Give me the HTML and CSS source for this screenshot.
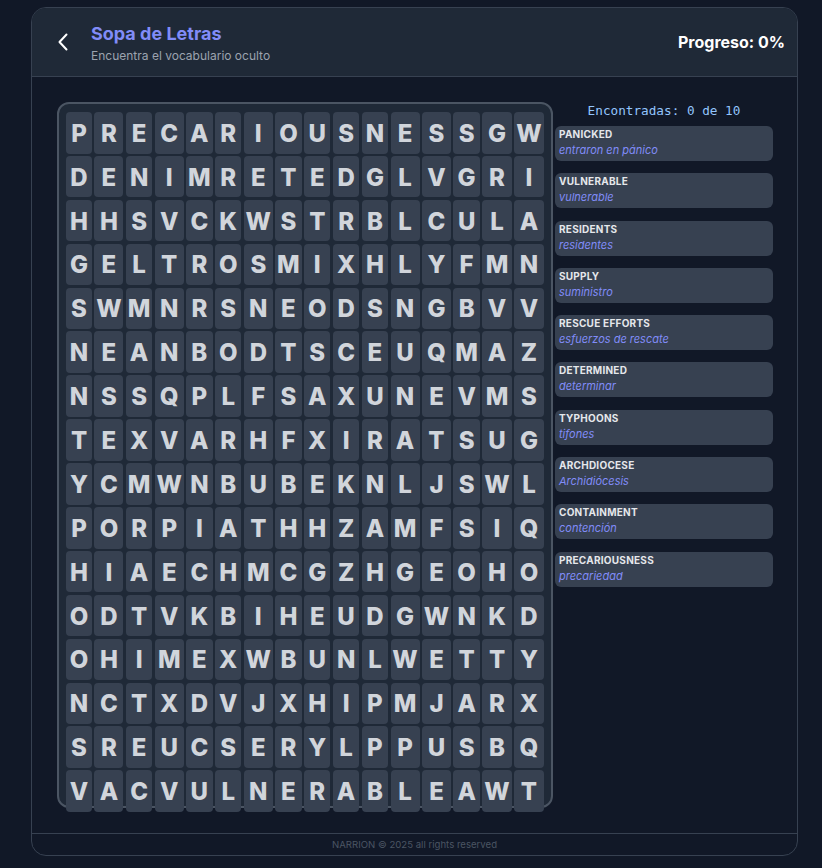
FILE: index.html
```html
<!DOCTYPE html>
<html lang="es">
<head>
<meta charset="utf-8">
<title>Sopa de Letras</title>
<link rel="stylesheet" href="styles.css">
</head>
<body>
<div class="card">
  <header class="header">
    <div class="header-left">
      <button class="back" aria-label="Volver">
        <svg width="12" height="18" viewBox="0 0 12 18"><path d="M9.5 1.5 L2.5 9 L9.5 16.5" fill="none" stroke="#ffffff" stroke-width="2" stroke-linecap="round" stroke-linejoin="round"/></svg>
      </button>
      <div class="titles">
        <h1 class="title">Sopa de Letras</h1>
        <p class="subtitle">Encuentra el vocabulario oculto</p>
      </div>
    </div>
    <div class="progress">Progreso: 0%</div>
  </header>

  <main class="main">
    <div class="board">
      <div class="grid">
        <div class="c">P</div><div class="c">R</div><div class="c">E</div><div class="c">C</div><div class="c">A</div><div class="c">R</div><div class="c">I</div><div class="c">O</div><div class="c">U</div><div class="c">S</div><div class="c">N</div><div class="c">E</div><div class="c">S</div><div class="c">S</div><div class="c">G</div><div class="c">W</div>
        <div class="c">D</div><div class="c">E</div><div class="c">N</div><div class="c">I</div><div class="c">M</div><div class="c">R</div><div class="c">E</div><div class="c">T</div><div class="c">E</div><div class="c">D</div><div class="c">G</div><div class="c">L</div><div class="c">V</div><div class="c">G</div><div class="c">R</div><div class="c">I</div>
        <div class="c">H</div><div class="c">H</div><div class="c">S</div><div class="c">V</div><div class="c">C</div><div class="c">K</div><div class="c">W</div><div class="c">S</div><div class="c">T</div><div class="c">R</div><div class="c">B</div><div class="c">L</div><div class="c">C</div><div class="c">U</div><div class="c">L</div><div class="c">A</div>
        <div class="c">G</div><div class="c">E</div><div class="c">L</div><div class="c">T</div><div class="c">R</div><div class="c">O</div><div class="c">S</div><div class="c">M</div><div class="c">I</div><div class="c">X</div><div class="c">H</div><div class="c">L</div><div class="c">Y</div><div class="c">F</div><div class="c">M</div><div class="c">N</div>
        <div class="c">S</div><div class="c">W</div><div class="c">M</div><div class="c">N</div><div class="c">R</div><div class="c">S</div><div class="c">N</div><div class="c">E</div><div class="c">O</div><div class="c">D</div><div class="c">S</div><div class="c">N</div><div class="c">G</div><div class="c">B</div><div class="c">V</div><div class="c">V</div>
        <div class="c">N</div><div class="c">E</div><div class="c">A</div><div class="c">N</div><div class="c">B</div><div class="c">O</div><div class="c">D</div><div class="c">T</div><div class="c">S</div><div class="c">C</div><div class="c">E</div><div class="c">U</div><div class="c">Q</div><div class="c">M</div><div class="c">A</div><div class="c">Z</div>
        <div class="c">N</div><div class="c">S</div><div class="c">S</div><div class="c">Q</div><div class="c">P</div><div class="c">L</div><div class="c">F</div><div class="c">S</div><div class="c">A</div><div class="c">X</div><div class="c">U</div><div class="c">N</div><div class="c">E</div><div class="c">V</div><div class="c">M</div><div class="c">S</div>
        <div class="c">T</div><div class="c">E</div><div class="c">X</div><div class="c">V</div><div class="c">A</div><div class="c">R</div><div class="c">H</div><div class="c">F</div><div class="c">X</div><div class="c">I</div><div class="c">R</div><div class="c">A</div><div class="c">T</div><div class="c">S</div><div class="c">U</div><div class="c">G</div>
        <div class="c">Y</div><div class="c">C</div><div class="c">M</div><div class="c">W</div><div class="c">N</div><div class="c">B</div><div class="c">U</div><div class="c">B</div><div class="c">E</div><div class="c">K</div><div class="c">N</div><div class="c">L</div><div class="c">J</div><div class="c">S</div><div class="c">W</div><div class="c">L</div>
        <div class="c">P</div><div class="c">O</div><div class="c">R</div><div class="c">P</div><div class="c">I</div><div class="c">A</div><div class="c">T</div><div class="c">H</div><div class="c">H</div><div class="c">Z</div><div class="c">A</div><div class="c">M</div><div class="c">F</div><div class="c">S</div><div class="c">I</div><div class="c">Q</div>
        <div class="c">H</div><div class="c">I</div><div class="c">A</div><div class="c">E</div><div class="c">C</div><div class="c">H</div><div class="c">M</div><div class="c">C</div><div class="c">G</div><div class="c">Z</div><div class="c">H</div><div class="c">G</div><div class="c">E</div><div class="c">O</div><div class="c">H</div><div class="c">O</div>
        <div class="c">O</div><div class="c">D</div><div class="c">T</div><div class="c">V</div><div class="c">K</div><div class="c">B</div><div class="c">I</div><div class="c">H</div><div class="c">E</div><div class="c">U</div><div class="c">D</div><div class="c">G</div><div class="c">W</div><div class="c">N</div><div class="c">K</div><div class="c">D</div>
        <div class="c">O</div><div class="c">H</div><div class="c">I</div><div class="c">M</div><div class="c">E</div><div class="c">X</div><div class="c">W</div><div class="c">B</div><div class="c">U</div><div class="c">N</div><div class="c">L</div><div class="c">W</div><div class="c">E</div><div class="c">T</div><div class="c">T</div><div class="c">Y</div>
        <div class="c">N</div><div class="c">C</div><div class="c">T</div><div class="c">X</div><div class="c">D</div><div class="c">V</div><div class="c">J</div><div class="c">X</div><div class="c">H</div><div class="c">I</div><div class="c">P</div><div class="c">M</div><div class="c">J</div><div class="c">A</div><div class="c">R</div><div class="c">X</div>
        <div class="c">S</div><div class="c">R</div><div class="c">E</div><div class="c">U</div><div class="c">C</div><div class="c">S</div><div class="c">E</div><div class="c">R</div><div class="c">Y</div><div class="c">L</div><div class="c">P</div><div class="c">P</div><div class="c">U</div><div class="c">S</div><div class="c">B</div><div class="c">Q</div>
        <div class="c">V</div><div class="c">A</div><div class="c">C</div><div class="c">V</div><div class="c">U</div><div class="c">L</div><div class="c">N</div><div class="c">E</div><div class="c">R</div><div class="c">A</div><div class="c">B</div><div class="c">L</div><div class="c">E</div><div class="c">A</div><div class="c">W</div><div class="c">T</div>
      </div>
    </div>

    <aside class="words">
      <div class="found">Encontradas: 0 de 10</div>
      <ul class="word-list">
        <li class="word"><span class="term">PANICKED</span><span class="trans">entraron en pánico</span></li>
        <li class="word"><span class="term">VULNERABLE</span><span class="trans">vulnerable</span></li>
        <li class="word"><span class="term">RESIDENTS</span><span class="trans">residentes</span></li>
        <li class="word"><span class="term">SUPPLY</span><span class="trans">suministro</span></li>
        <li class="word"><span class="term">RESCUE EFFORTS</span><span class="trans">esfuerzos de rescate</span></li>
        <li class="word"><span class="term">DETERMINED</span><span class="trans">determinar</span></li>
        <li class="word"><span class="term">TYPHOONS</span><span class="trans">tifones</span></li>
        <li class="word"><span class="term">ARCHDIOCESE</span><span class="trans">Archidiócesis</span></li>
        <li class="word"><span class="term">CONTAINMENT</span><span class="trans">contención</span></li>
        <li class="word"><span class="term">PRECARIOUSNESS</span><span class="trans">precariedad</span></li>
      </ul>
    </aside>
  </main>

  <footer class="footer">NARRION © 2025 all rights reserved</footer>
</div>
</body>
</html>
```
FILE: styles.css
```css
* { box-sizing: border-box; }

html, body {
  margin: 0;
  padding: 0;
  background: #111827;
}

body {
  font-family: Inter, "Noto Sans", "Liberation Sans", sans-serif;
  color: #e5e7eb;
  padding-top: 7px;
}

.card {
  margin-left: 31px;
  width: 767px;
  height: 849px;
  border: 1px solid #374151;
  border-radius: 15px;
  background: #111827;
  overflow: hidden;
  display: flex;
  flex-direction: column;
}

.header {
  height: 69px;
  flex: none;
  display: flex;
  align-items: center;
  justify-content: space-between;
  background: #1f2937;
  border-bottom: 1px solid #374151;
  padding: 0 12px 0 25px;
}

.header-left {
  display: flex;
  align-items: center;
  gap: 22px;
}

.back {
  background: none;
  border: 0;
  padding: 0;
  margin: 0;
  width: 12px;
  height: 18px;
  display: flex;
  cursor: pointer;
}

.titles {
  display: flex;
  flex-direction: column;
  padding-top: 2px;
}

.title {
  margin: 0;
  font-size: 18px;
  line-height: 24px;
  font-weight: 700;
  color: #818cf8;
}

.subtitle {
  margin: 2px 0 0;
  font-size: 12px;
  line-height: 16px;
  color: #9ca3af;
}

.progress {
  font-size: 16px;
  font-weight: 700;
  color: #ffffff;
}

.main {
  flex: 1;
  display: flex;
  align-items: flex-start;
  gap: 2px;
  padding: 25px 24px 25px 25px;
}

.board {
  flex: none;
  width: 496px;
  height: 706px;
  border: 2px solid #4b5563;
  border-radius: 12px;
  background: #1f2937;
  padding: 8px 7px;
}

.grid {
  display: grid;
  grid-template-columns: 26px 29px 26.4px 29px 26.4px 26.4px 29px 26.4px 26.4px 26.4px 26.4px 29px 29px 26.4px 29.5px 29.5px;
  grid-auto-rows: 41.5px;
  column-gap: 2.45px;
  row-gap: 2.4px;
}

.c {
  background: #374151;
  border-radius: 4px;
  display: flex;
  align-items: center;
  justify-content: center;
  padding-top: 1px;
  font-size: 24px;
  font-weight: 800;
  color: #d1d5db;
}

.words {
  flex: none;
  width: 218px;
  display: flex;
  flex-direction: column;
}

.found {
  font-family: "DejaVu Sans Mono", "Liberation Mono", monospace;
  font-size: 12.7px;
  line-height: 18px;
  text-align: center;
  color: #93c5fd;
  margin-bottom: 6px;
}

.word-list {
  list-style: none;
  margin: 0;
  padding: 0;
  display: flex;
  flex-direction: column;
  gap: 12.3px;
}

.word {
  background: #374151;
  border-radius: 6px;
  padding: 1px 4px 2px;
  height: 35px;
  display: flex;
  flex-direction: column;
}

.term {
  font-size: 10px;
  line-height: 14px;
  font-weight: 700;
  letter-spacing: 0.25px;
  color: #e5e7eb;
}

.trans {
  font-size: 11px;
  line-height: 18px;
  font-style: italic;
  color: #818cf8;
}

.footer {
  flex: none;
  height: 23px;
  border-top: 1px solid #374151;
  text-align: center;
  font-size: 9.6px;
  line-height: 21px;
  color: #4b5563;
}
```
